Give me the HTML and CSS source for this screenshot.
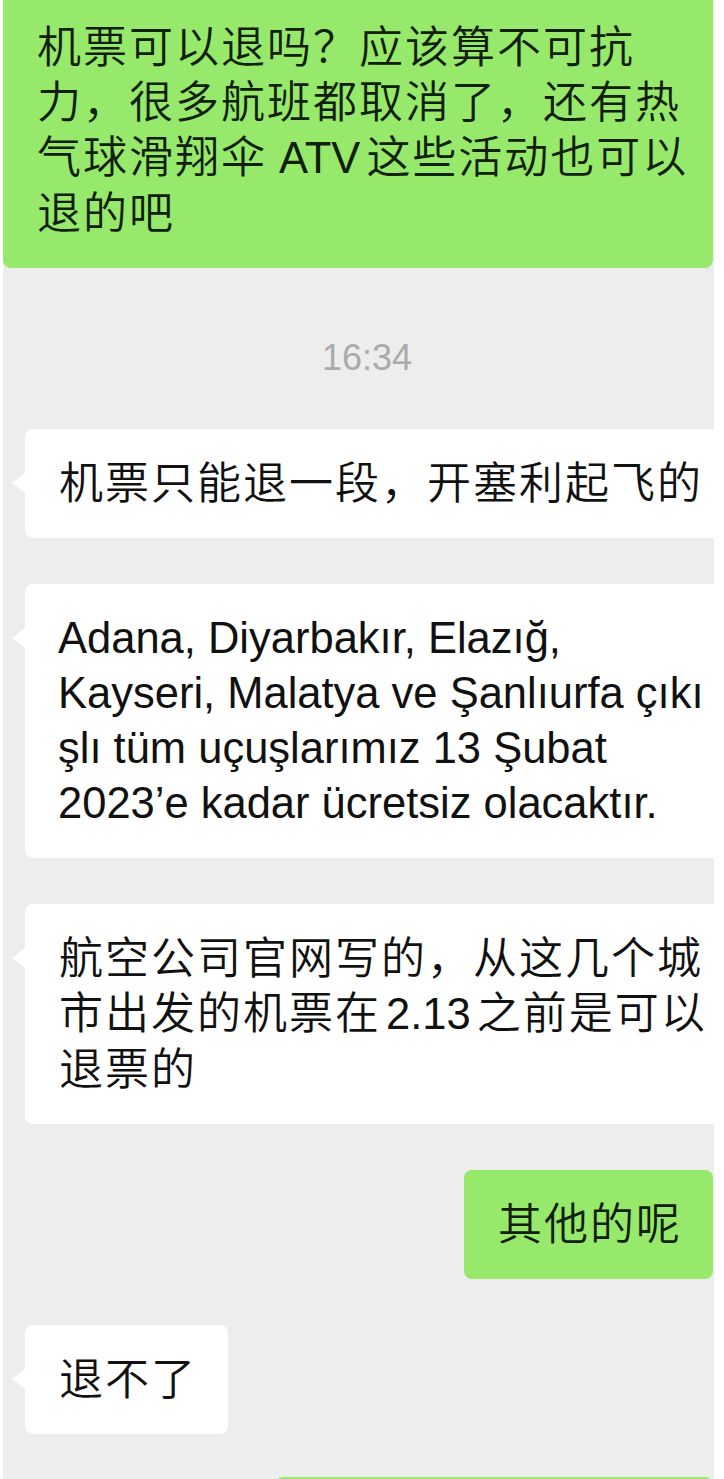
FILE: index.html
```html
<!DOCTYPE html>
<html lang="zh-CN">
<head>
<meta charset="utf-8">
<title>聊天记录</title>
<link rel="stylesheet" href="styles.css">
</head>
<body>
<main class="chat">
  <div class="row row--out row--first">
    <div class="bubble bubble--out bubble--wide">机票可以退吗？应该算不可抗<br>力，很多航班都取消了，还有热<br>气球滑翔伞<span class="lat lat--gap">ATV</span>这些活动也可以<br>退的吧</div>
  </div>

  <div class="time">16:34</div>

  <div class="row row--in">
    <div class="bubble bubble--in">机票只能退一段，开塞利起飞的</div>
  </div>

  <div class="row row--in">
    <div class="bubble bubble--in bubble--latin">Adana, Diyarbakır, Elazığ,<br>Kayseri, Malatya ve Şanlıurfa çıkı<br>şlı tüm uçuşlarımız 13 Şubat<br>2023’e kadar ücretsiz olacaktır.</div>
  </div>

  <div class="row row--in">
    <div class="bubble bubble--in">航空公司官网写的，从这几个城<br>市出发的机票在<span class="lat">2.13</span>之前是可以<br>退票的</div>
  </div>

  <div class="row row--out">
    <div class="bubble bubble--out">其他的呢</div>
  </div>

  <div class="row row--in">
    <div class="bubble bubble--in">退不了</div>
  </div>

  <div class="row row--out row--last">
    <div class="bubble bubble--out bubble--partial"></div>
  </div>
</main>
</body>
</html>
```

FILE: styles.css
```css
* {
  box-sizing: border-box;
}

html, body {
  margin: 0;
  padding: 0;
  background: #ffffff;
}

body {
  width: 724px;
  height: 1479px;
  overflow: hidden;
}

.chat {
  margin-left: 3px;
  width: 711px;
  height: 1479px;
  overflow: hidden;
  background: #ededed;
  display: flex;
  flex-direction: column;
  gap: 46px;
  font-family: "Liberation Sans", "Noto Sans CJK SC", sans-serif;
  color: #111111;
}

.row {
  display: flex;
  flex-shrink: 0;
}

.row--in {
  justify-content: flex-start;
  padding-left: 22px;
}

.row--out {
  justify-content: flex-end;
  padding-right: 1px;
}

.row--first {
  margin-top: -7px;
}

.row--last {
  margin-top: -3px;
}

.bubble {
  position: relative;
  flex-shrink: 0;
  font-size: 44px;
  font-weight: 350;
  letter-spacing: 2px;
  line-height: 55px;
  padding: 27px 31px 27px 34px;
  border-radius: 8px;
  white-space: nowrap;
}

.bubble--in {
  background: #ffffff;
}

.bubble--in::before {
  content: "";
  position: absolute;
  left: -13px;
  top: 44px;
  width: 0;
  height: 0;
  border-top: 10px solid transparent;
  border-bottom: 10px solid transparent;
  border-right: 13px solid #ffffff;
}

.bubble--out {
  background: #97e96b;
  color: #10200a;
}

.bubble--wide {
  width: 710px;
}

.bubble--latin {
  font-size: 43.5px;
  font-weight: 400;
  letter-spacing: 0;
  padding-left: 33px;
}

.bubble--partial {
  width: 438px;
  height: 109px;
}

.lat {
  font-size: 43.5px;
  font-weight: 400;
  letter-spacing: 0;
  margin: 0 6px 0 5px;
}

.lat--gap {
  margin-left: 12px;
}

.time {
  flex-shrink: 0;
  margin: 24px 0 5px;
  padding-left: 17px;
  text-align: center;
  font-size: 36px;
  line-height: 40px;
  color: #ababab;
}
```
